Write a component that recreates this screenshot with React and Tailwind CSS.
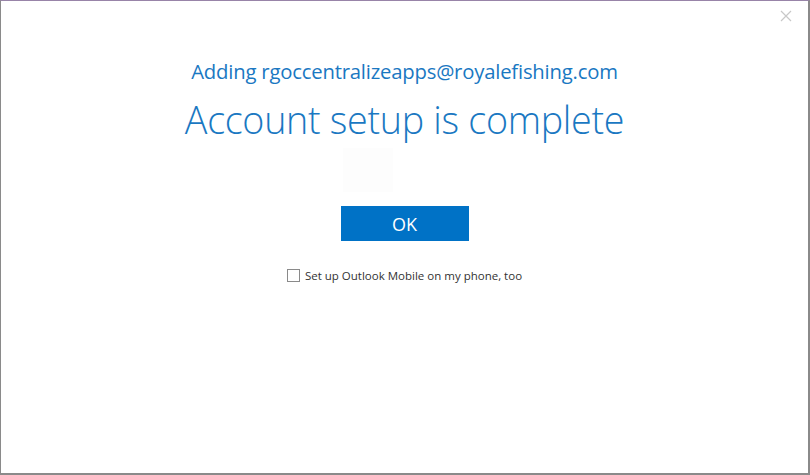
import React, { useState } from 'react';

const App = () => {
    const [mobile, setMobile] = useState(false);

    return (
        <div className="w-[810px] h-[475px] bg-white border-t border-t-[#9884a8] border-l border-l-[#8a8a8a] border-r-2 border-r-[#8a8a8a] border-b-2 border-b-[#8a8a8a] relative font-['Open_Sans',sans-serif]">
            <button className="absolute right-[16px] top-[9px] w-[12px] h-[12px] text-[#c8c8c8]">
                <svg viewBox="0 0 12 12" className="w-[12px] h-[12px]" stroke="currentColor" strokeWidth="1.2">
                    <path d="M1 1 L11 11 M11 1 L1 11" />
                </svg>
            </button>

            <div className="flex flex-col items-center pt-[56px]">
                <div className="text-[20.3px] leading-[28px] text-[#1a78c2] tracking-[-0.2px]">
                    Adding rgoccentralizeapps@royalefishing.com
                </div>
                <div className="text-[37.7px] leading-[46px] font-light text-[#1a78c2] mt-[12px] tracking-[-0.3px]">
                    Account setup is complete
                </div>
                <div className="w-full pl-[342px] mt-[5px]">
                    <div className="w-[50px] h-[44px] bg-[#fdfdfd]"></div>
                </div>
                <button className="mt-[14px] w-[128px] h-[35px] bg-[#0072c6] text-white text-[18px] leading-none">
                    OK
                </button>
                <label className="mt-[26px] flex items-center gap-[5px] text-[11.5px] text-[#333] cursor-pointer">
                    <input
                        type="checkbox"
                        checked={mobile}
                        onChange={(e) => setMobile(e.target.checked)}
                        className="appearance-none w-[13px] h-[13px] border border-[#8a8a8a] bg-white"
                    />
                    Set up Outlook Mobile on my phone, too
                </label>
            </div>
        </div>
    );
};

export default App;
